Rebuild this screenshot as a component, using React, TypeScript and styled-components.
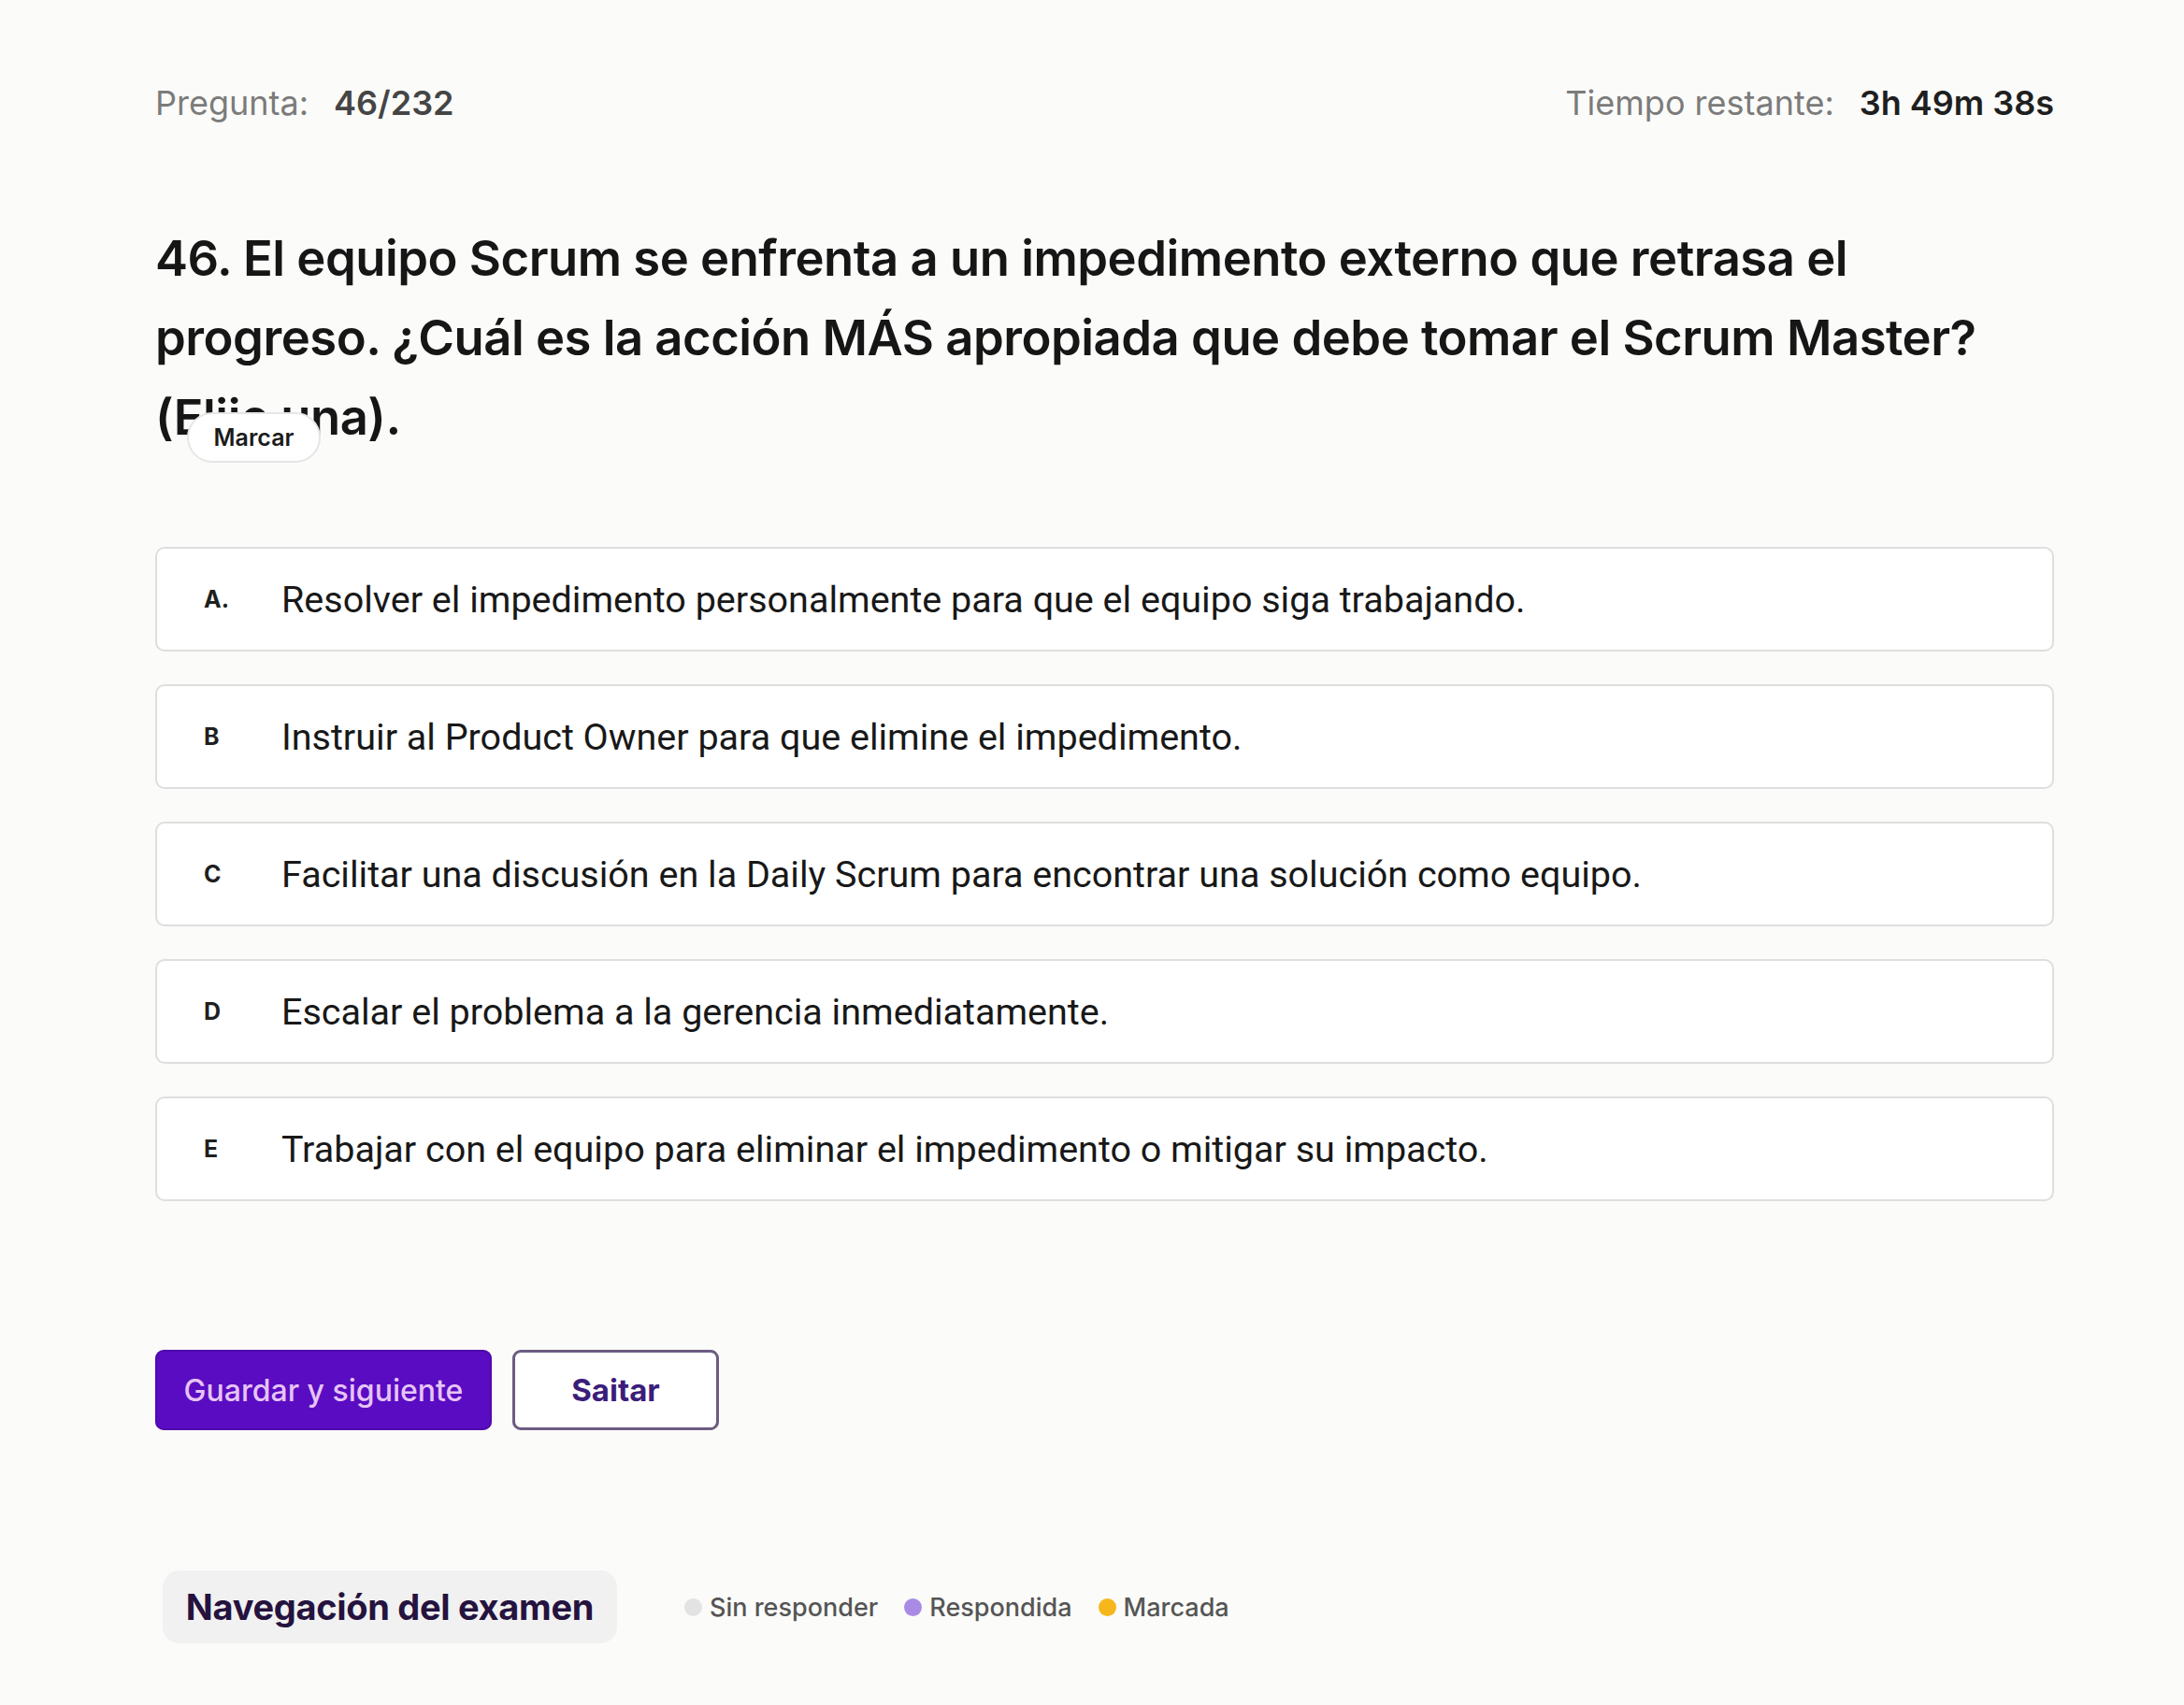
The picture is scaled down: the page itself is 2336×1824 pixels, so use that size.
import React from 'react'
import styled, { createGlobalStyle } from 'styled-components'

const GlobalStyle = createGlobalStyle`
    html, body {
        margin: 0;
        padding: 0;
        background: #fbfbf9;
    }
    * {
        box-sizing: border-box;
    }
`

const Page = styled.div`
    min-height: 1824px;
    padding: 89px 139px 0 166px;
    font-family: Inter, "Noto Sans", sans-serif;
    color: #1c1c1c;
`

const TopBar = styled.header`
    display: flex;
    justify-content: space-between;
    align-items: center;
    font-size: 36px;
    line-height: 43px;
`

const Stat = styled.div`
    display: flex;
    gap: 27px;
`

const StatLabel = styled.span`
    color: #7b7b7b;
    font-weight: 400;
`

const StatValue = styled.span<{ $dark?: boolean }>`
    color: ${p => (p.$dark ? '#1f1f1f' : '#454545')};
    font-weight: 600;
`

const QuestionWrap = styled.div`
    position: relative;
    margin-top: 102px;
`

const Question = styled.h1`
    margin: 0;
    max-width: 1990px;
    font-size: 52.6px;
    line-height: 85px;
    font-weight: 600;
    letter-spacing: -0.5px;
    color: #161616;
`

const FlagPill = styled.button`
    position: absolute;
    left: 34px;
    top: 207px;
    width: 143px;
    height: 54px;
    border: 2px solid #e6e6e6;
    border-radius: 27px;
    background: #fff;
    font-family: Inter, sans-serif;
    font-size: 25px;
    font-weight: 600;
    color: #1b1b1b;
    padding: 0;
`

const Options = styled.div`
    display: flex;
    flex-direction: column;
    gap: 35px;
    margin-top: 96px;
`

const Option = styled.div`
    display: flex;
    align-items: center;
    height: 112px;
    padding-left: 50px;
    background: #fff;
    border: 2px solid #dedede;
    border-radius: 10px;
`

const Letter = styled.span`
    width: 83px;
    font-family: Inter, sans-serif;
    font-size: 25px;
    font-weight: 700;
    color: #1f1f1f;
`

const OptionText = styled.span`
    font-family: Roboto, "Noto Sans", sans-serif;
    font-size: 39.5px;
    color: #181818;
`

const Actions = styled.div`
    display: flex;
    gap: 22px;
    margin-top: 159px;
`

const Button = styled.button<{ $primary?: boolean }>`
    height: 86px;
    padding: 0;
    width: ${p => (p.$primary ? '360px' : '221px')};
    border-radius: 9px;
    font-family: Inter, sans-serif;
    font-size: ${p => (p.$primary ? '32px' : '33px')};
    font-weight: ${p => (p.$primary ? 500 : 700)};
    background: ${p => (p.$primary ? '#5a0cc2' : '#ffffff')};
    color: ${p => (p.$primary ? '#e6c4f6' : '#3c1d7a')};
    border: ${p => (p.$primary ? '2px solid #4f0aab' : '3px solid #6c5c82')};
`

const NavRow = styled.div`
    display: flex;
    align-items: center;
    margin-top: 150px;
    padding-left: 8px;
`

const NavTitle = styled.div`
    width: 486px;
    height: 78px;
    display: flex;
    align-items: center;
    justify-content: center;
    background: #f1f1f1;
    border-radius: 18px;
    font-size: 38px;
    font-weight: 700;
    color: #25133f;
    letter-spacing: -0.3px;
`

const Legend = styled.div`
    display: flex;
    gap: 28px;
    margin-left: 72px;
`

const LegendItem = styled.div`
    display: flex;
    align-items: center;
    gap: 8px;
    font-size: 27px;
    font-weight: 500;
    color: #555;
`

const Dot = styled.span<{ $color: string }>`
    width: 19px;
    height: 19px;
    border-radius: 50%;
    background: ${p => p.$color};
`

const options = [
    { key: 'A.', text: 'Resolver el impedimento personalmente para que el equipo siga trabajando.' },
    { key: 'B', text: 'Instruir al Product Owner para que elimine el impedimento.' },
    { key: 'C', text: 'Facilitar una discusión en la Daily Scrum para encontrar una solución como equipo.' },
    { key: 'D', text: 'Escalar el problema a la gerencia inmediatamente.' },
    { key: 'E', text: 'Trabajar con el equipo para eliminar el impedimento o mitigar su impacto.' },
]

const legend = [
    { label: 'Sin responder', color: '#e3e3e3' },
    { label: 'Respondida', color: '#a98be6' },
    { label: 'Marcada', color: '#f5b71c' },
]

const App = () => {
    return (
        <Page>
            <GlobalStyle />
            <TopBar>
                <Stat>
                    <StatLabel>Pregunta:</StatLabel>
                    <StatValue>46/232</StatValue>
                </Stat>
                <Stat>
                    <StatLabel>Tiempo restante:</StatLabel>
                    <StatValue $dark>3h 49m 38s</StatValue>
                </Stat>
            </TopBar>

            <QuestionWrap>
                <Question>
                    46. El equipo Scrum se enfrenta a un impedimento externo que retrasa el progreso. ¿Cuál es
                    la acción MÁS apropiada que debe tomar el Scrum Master? (Elije una).
                </Question>
                <FlagPill>Marcar</FlagPill>
            </QuestionWrap>

            <Options>
                {options.map(o => (
                    <Option key={o.key}>
                        <Letter>{o.key}</Letter>
                        <OptionText>{o.text}</OptionText>
                    </Option>
                ))}
            </Options>

            <Actions>
                <Button $primary>Guardar y siguiente</Button>
                <Button>Saitar</Button>
            </Actions>

            <NavRow>
                <NavTitle>Navegación del examen</NavTitle>
                <Legend>
                    {legend.map(l => (
                        <LegendItem key={l.label}>
                            <Dot $color={l.color} />
                            {l.label}
                        </LegendItem>
                    ))}
                </Legend>
            </NavRow>
        </Page>
    )
}

export default App
